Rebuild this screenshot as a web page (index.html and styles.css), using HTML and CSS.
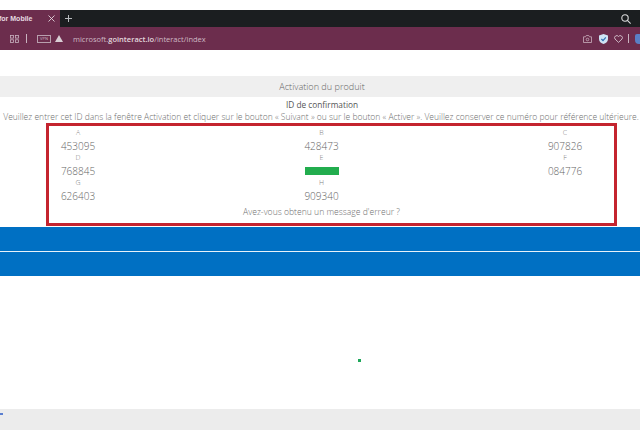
FILE: index.html
```html
<!DOCTYPE html>
<html lang="fr">
<head>
<meta charset="utf-8">
<title>Activation du produit</title>
<link rel="stylesheet" href="styles.css">
</head>
<body>
<header class="browser">
  <div class="tabbar">
    <div class="tab"><span class="tab-title">for Mobile</span>
      <svg class="tab-close" width="7" height="7" viewBox="0 0 7 7"><path d="M.5.5l6 6M6.500.5l-6 6" stroke="#e3d6dd" stroke-width=".9"/></svg>
    </div>
    <svg class="plus" width="7" height="7" viewBox="0 0 7 7"><path d="M3.500 0v7M0 3.500h7" stroke="#b9bcbe" stroke-width="1"/></svg>
    <svg class="search" width="10" height="10" viewBox="0 0 10 10" fill="none" stroke="#dcdcdc" stroke-width="1.100"><circle cx="4" cy="4" r="3.200"/><path d="M6.400 6.400l3.200 3.200"/></svg>
  </div>
  <div class="urlbar">
    <svg class="grid-icon" width="9" height="8" viewBox="0 0 9 8" fill="none" stroke="#c9b3c0" stroke-width=".8"><rect x=".5" y=".5" width="3" height="2.600"/><rect x="5.500" y=".5" width="3" height="2.600"/><rect x=".5" y="4.800" width="3" height="2.600"/><rect x="5.500" y="4.800" width="3" height="2.600"/></svg>
    <span class="sep"></span>
    <span class="vpn">VPN</span>
    <svg class="warn" width="8" height="7" viewBox="0 0 8 7"><path d="M4 0l4 7H0z" fill="#d9ced5"/></svg>
    <span class="url">microsoft.<b>gointeract.io</b>/interact/index</span>
    <span class="url-tools">
      <svg width="9" height="8" viewBox="0 0 9 8" fill="none" stroke="#c9aebd" stroke-width=".8"><path d="M.5 1.800h2l.8-1.300h2.400l.8 1.300h2v5.700h-8z"/><circle cx="4.500" cy="4.500" r="1.300"/></svg>
      <svg width="9" height="10" viewBox="0 0 9 10"><path d="M4.500 0L9 1.500V5c0 2.600-2 4.200-4.500 5C2 9.200 0 7.600 0 5V1.500z" fill="#cfe3f5"/><path d="M2.400 5l1.600 1.600L6.800 3.400" fill="none" stroke="#2c6fb3" stroke-width="1.200"/></svg>
      <svg width="9" height="8" viewBox="0 0 9 8" fill="none" stroke="#d8c6d0" stroke-width=".9"><path d="M4.500 7.400L1 4A2.100 2.100 0 0 1 4.500 1.500 2.100 2.100 0 0 1 8 4z"/></svg>
      <span class="sep"></span>
      <span class="ext"></span>
    </span>
  </div>
</header>
<main class="page">
  <h1 class="band">Activation du produit</h1>
  <h2 class="subtitle">ID de confirmation</h2>
  <p class="hint">Veuillez entrer cet ID dans la fenêtre Activation et cliquer sur le bouton « Suivant » ou sur le bouton « Activer ». Veuillez conserver ce numéro pour référence ultérieure.</p>
  <section class="codes">
    <div class="grid">
      <div class="cell"><span class="key">A</span><span class="val">453095</span></div>
      <div class="cell"><span class="key">B</span><span class="val">428473</span></div>
      <div class="cell"><span class="key">C</span><span class="val">907826</span></div>
      <div class="cell"><span class="key">D</span><span class="val">768845</span></div>
      <div class="cell"><span class="key">E</span><span class="val redacted"></span></div>
      <div class="cell"><span class="key">F</span><span class="val">084776</span></div>
      <div class="cell"><span class="key">G</span><span class="val">626403</span></div>
      <div class="cell"><span class="key">H</span><span class="val">909340</span></div>
    </div>
    <p class="error">Avez-vous obtenu un message d'erreur ?</p>
  </section>
  <div class="blue"></div>
  <div class="canvas"><span class="dot"></span></div>
  <footer class="foot"><span class="foot-mark"></span></footer>
</main>
</body>
</html>
```
FILE: styles.css
```css
* { box-sizing: border-box; }
html, body { margin: 0; padding: 0; }
body {
  width: 640px;
  height: 437px;
  overflow: hidden;
  background: #fff;
  font-family: "Open Sans", "Liberation Sans", sans-serif;
  font-weight: 300;
  color: #6b6b6b;
}
.browser { margin-top: 10px; }
.tabbar {
  height: 17px;
  background: #1b1e20;
  display: flex;
  align-items: center;
}
.tab {
  width: 60px;
  height: 17px;
  background: #6c2d4d;
  display: flex;
  align-items: center;
  overflow: hidden;
  color: #e6dbe1;
  font-size: 7px;
  font-weight: 600;
  font-family: "Liberation Sans", sans-serif;
}
.tab-title { width: 49px; margin-left: -1px; white-space: nowrap; }
.tab-close { flex: none; }
.plus { margin-left: 5px; }
.search { margin-left: auto; margin-right: 9px; }
.urlbar {
  height: 23px;
  background: #6c2d4d;
  display: flex;
  align-items: center;
  padding-left: 10px;
  color: #cdb9c4;
}
.sep { width: 1px; height: 9px; background: #c9b3c0; }
.urlbar > .sep { margin-left: 7px; }
.vpn {
  margin-left: 10px;
  width: 14px;
  height: 8px;
  border: 1px solid #b89fae;
  font-size: 4px;
  line-height: 6px;
  text-align: center;
  font-weight: 400;
}
.warn { margin-left: 4px; }
.url {
  margin-left: 10px;
  font-size: 7.5px;
  font-weight: 400;
  white-space: nowrap;
}
.url b { font-weight: 600; color: #e2d8dd; }
.url-tools {
  margin-left: auto;
  display: flex;
  align-items: center;
  gap: 6px;
}
.url-tools svg:nth-child(1) { margin-right: 1px; }
.url-tools .sep { margin-left: -1px; }
.ext {
  width: 5px;
  height: 10px;
  background: #5a7fc6;
  border-radius: 2px 0 0 4px;
}
.page { padding-top: 26px; text-align: center; }
.band {
  margin: 0;
  height: 21px;
  line-height: 21px;
  padding-left: 4px;
  background: #efefef;
  font-size: 9.1px;
  font-weight: 300;
  color: #666;
}
.subtitle {
  margin: 2px 0 0;
  height: 12px;
  line-height: 12px;
  padding-left: 4px;
  font-size: 8.3px;
  font-weight: 400;
  color: #555;
}
.hint {
  margin: 0;
  height: 12px;
  line-height: 11px;
  padding-left: 2px;
  font-size: 8.52px;
  white-space: nowrap;
  color: #707070;
}
.codes {
  margin: 0 23px 0 46px;
  height: 103px;
  border: 3px solid #c4242f;
  padding: 2px 20px 0 0;
}
.grid {
  display: grid;
  grid-template-columns: repeat(3, 58px);
  justify-content: space-between;
  grid-auto-rows: 25px;
}
.cell { display: flex; flex-direction: column; align-items: center; }
.key { height: 10px; line-height: 10px; font-size: 7px; color: #808080; }
.val { height: 15px; line-height: 17px; font-size: 10px; color: #666; }
.redacted {
  width: 34px;
  height: 8px;
  margin-top: 4px;
  background: #22ad4e;
}
.error {
  margin: 3px 0 0;
  font-size: 8.6px;
  line-height: 12px;
  color: #707070;
}
.blue {
  margin-top: 1px;
  height: 49px;
  background: linear-gradient(#0070c3 24px, #e8f2fa 24px, #e8f2fa 25px, #0070c3 25px);
}
.canvas {
  position: relative;
  height: 133px;
}
.dot {
  position: absolute;
  left: 358px;
  top: 83px;
  width: 3px;
  height: 3px;
  background: #1ea75a;
}
.foot {
  position: relative;
  height: 21px;
  background: #ececec;
}
.foot-mark {
  position: absolute;
  left: 0;
  top: 4px;
  width: 3px;
  height: 2px;
  background: #5b7fd0;
}
```
